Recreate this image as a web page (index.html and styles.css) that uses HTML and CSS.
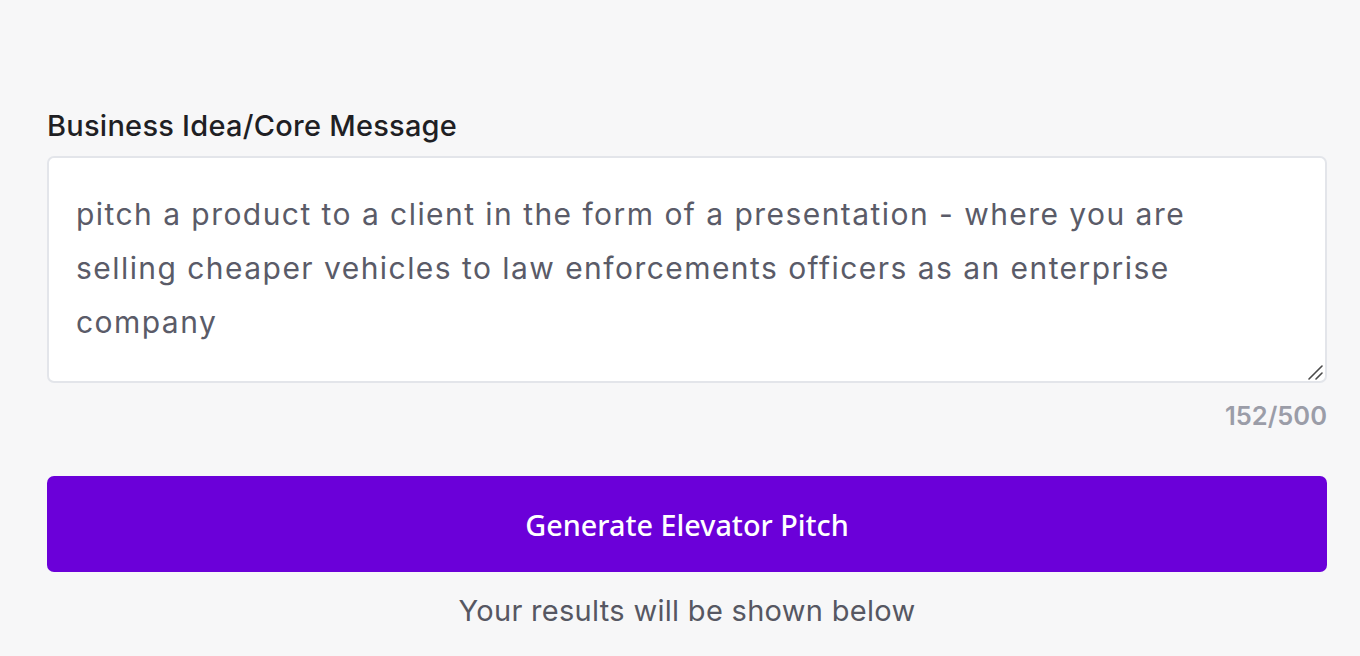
FILE: index.html
```html
<!DOCTYPE html>
<html lang="en">
<head>
<meta charset="utf-8">
<link rel="stylesheet" href="styles.css">
<title>Elevator Pitch</title>
</head>
<body>
<main class="form">
  <label class="label" for="idea">Business Idea/Core Message</label>
  <div class="field-wrap">
    <textarea id="idea" class="field">pitch a product to a client in the form of a presentation - where you are selling cheaper vehicles to law enforcements officers as an enterprise company</textarea>
    <svg class="grip" width="16" height="16" viewBox="0 0 16 16" aria-hidden="true">
      <path d="M2 15 L15 2 M9 15 L15 9" stroke="#4a4a4a" stroke-width="1.6" stroke-linecap="round" fill="none"/>
    </svg>
  </div>
  <div class="counter">152/500</div>
  <button class="btn" type="button">Generate Elevator Pitch</button>
  <p class="note">Your results will be shown below</p>
</main>
</body>
</html>
```
FILE: styles.css
```css
html, body {
  margin: 0;
  padding: 0;
  background: #f7f7f8;
}
body {
  font-family: Inter, Lato, sans-serif;
  overflow: hidden;
}
.form {
  display: flex;
  flex-direction: column;
  padding: 108px 33px 0 47px;
}
.label {
  font-size: 29px;
  font-weight: 500;
  letter-spacing: 0.25px;
  color: #1f1f24;
  line-height: 36px;
  margin-bottom: 12px;
}
.field-wrap {
  position: relative;
  display: flex;
}
.field {
  box-sizing: border-box;
  width: 100%;
  height: 227px;
  border: 2px solid #e3e5ea;
  border-radius: 7px;
  background: #fff;
  padding: 29px 70px 27px 27px;
  font-family: Inter, Lato, sans-serif;
  font-size: 30px;
  letter-spacing: 1.45px;
  line-height: 54px;
  color: #5a5b68;
  resize: none;
  outline: none;
}
.grip {
  position: absolute;
  right: 4px;
  bottom: 3px;
}
.counter {
  align-self: flex-end;
  margin-top: 17px;
  font-size: 25.5px;
  font-weight: 600;
  color: #9b9da8;
  line-height: 32px;
}
.btn {
  margin-top: 44px;
  height: 96px;
  border: none;
  border-radius: 7px;
  background: #6b00d9;
  color: #fff;
  font-family: "Noto Sans", sans-serif;
  font-size: 28.8px;
  font-weight: 500;
}
.note {
  margin: 21px 0 0;
  text-align: center;
  font-size: 29px;
  letter-spacing: 0.3px;
  color: #565762;
  line-height: 36px;
}
```
